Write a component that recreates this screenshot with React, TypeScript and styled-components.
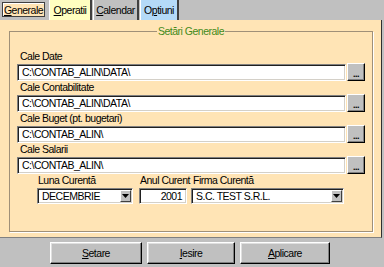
import React from 'react';
import styled, { createGlobalStyle } from 'styled-components';

const GlobalStyle = createGlobalStyle`
  html, body {
    margin: 0;
    padding: 0;
    background: #c0c0c0;
  }
  body {
    font-family: "Liberation Sans", Arial, sans-serif;
    font-size: 10.5px;
    letter-spacing: -0.5px;
    color: #000;
  }
`;

const Window = styled.div`
  width: 384px;
  height: 267px;
  background: #c0c0c0;
  display: flex;
  flex-direction: column;
  overflow: hidden;
`;

const TabBar = styled.div`
  height: 20px;
  display: flex;
  align-items: stretch;
  padding-left: 2px;
`;

const Tab = styled.div<{ $bg: string; $w: number; $gap?: number }>`
  width: ${(p) => p.$w}px;
  box-sizing: border-box;
  display: flex;
  align-items: center;
  justify-content: center;
  margin-right: ${(p) => p.$gap ?? 1}px;
  background: ${(p) => p.$bg};
  border-left: 1px solid #fff;
  border-right: 2px solid #404040;
  white-space: nowrap;
`;

const FocusTab = styled.div`
  width: 43px;
  box-sizing: border-box;
  margin: 2px 4px 3px 0;
  display: flex;
  align-items: center;
  justify-content: center;
  background: #ffe4b5;
  border: 1px solid #404040;
  box-shadow: inset 1px 1px 0 #fff;
  white-space: nowrap;
`;

const Panel = styled.div`
  width: 382px;
  height: 218px;
  box-sizing: border-box;
  background: #ffe4b5;
  border-right: 1px solid #303030;
  border-bottom: 1px solid #808080;
  padding: 5px 8px 5px 9px;
  display: flex;
`;

const Group = styled.fieldset`
  flex: 1;
  margin: 0;
  padding: 12px 7px 0 7px;
  border: 1px solid #a09078;
  box-shadow: 1px 1px 0 #fff;
  min-width: 0;
`;

const Legend = styled.legend`
  margin: 0 auto;
  padding: 0 1px;
  color: #3f8a1a;
  line-height: 13px;
`;

const Label = styled.div<{ $indent?: number }>`
  height: 13px;
  line-height: 13px;
  padding-left: ${(p) => p.$indent ?? 3}px;
  white-space: nowrap;
`;

const Row = styled.div`
  height: 18px;
  display: flex;
  align-items: center;
  gap: 1px;
`;

const sunken = `
  box-sizing: border-box;
  background: #fff;
  border-top: 1px solid #808080;
  border-left: 1px solid #808080;
  border-right: 1px solid #fff;
  border-bottom: 1px solid #fff;
  box-shadow: inset 1px 1px 0 #202020, inset -1px -1px 0 #d4d0c8;
`;

const TextBox = styled.div<{ $align?: string }>`
  ${sunken}
  flex: 1;
  height: 17px;
  padding: 0 4px;
  display: flex;
  align-items: center;
  justify-content: ${(p) => (p.$align === 'right' ? 'flex-end' : 'flex-start')};
  white-space: nowrap;
  overflow: hidden;
`;

const DotsButton = styled.div`
  width: 18px;
  height: 18px;
  box-sizing: border-box;
  background: #c0c0c0;
  border-top: 1px solid #fff;
  border-left: 1px solid #fff;
  border-right: 1px solid #000;
  border-bottom: 1px solid #000;
  box-shadow: inset -1px -1px 0 #808080;
  display: flex;
  align-items: flex-end;
  justify-content: center;
  font-size: 9px;
  font-weight: bold;
  line-height: 11px;
  letter-spacing: -0.5px;
`;

const BottomRow = styled.div`
  display: grid;
  grid-template-columns: 96px 48px 151px;
  column-gap: 6px;
  padding-left: 20px;
  & > :last-child {
    margin-left: -2px;
  }
`;

const Field = styled.div`
  display: flex;
  flex-direction: column;
`;

const Combo = styled.div`
  ${sunken}
  height: 16px;
  margin-top: 1px;
  display: flex;
  align-items: stretch;
  padding: 1px 1px 1px 4px;
`;

const ComboText = styled.div`
  flex: 1;
  display: flex;
  align-items: center;
  white-space: nowrap;
`;

const ComboArrow = styled.div`
  width: 11px;
  box-sizing: border-box;
  background: #c0c0c0;
  border-top: 1px solid #fff;
  border-left: 1px solid #fff;
  border-right: 1px solid #404040;
  border-bottom: 1px solid #404040;
  display: flex;
  align-items: center;
  justify-content: center;
`;

const SmallBox = styled(TextBox)`
  flex: none;
  height: 16px;
  margin-top: 1px;
`;

const ButtonBar = styled.div`
  display: flex;
  justify-content: center;
  gap: 5px;
  padding: 4px 0 0 0;
  margin-left: -4px;
`;

const Button = styled.div<{ $w: number }>`
  width: ${(p) => p.$w}px;
  height: 22px;
  box-sizing: border-box;
  background: #c0c0c0;
  border-top: 1px solid #fff;
  border-left: 1px solid #fff;
  border-right: 1px solid #000;
  border-bottom: 1px solid #000;
  box-shadow: inset -1px -1px 0 #808080, inset 1px 1px 0 #dfdfdf;
  display: flex;
  align-items: center;
  justify-content: center;
`;

const paths = [
  { label: 'Cale Date', value: 'C:\\CONTAB_ALIN\\DATA\\' },
  { label: 'Cale Contabilitate', value: 'C:\\CONTAB_ALIN\\DATA\\' },
  { label: 'Cale Buget (pt. bugetari)', value: 'C:\\CONTAB_ALIN\\' },
  { label: 'Cale Salarii', value: 'C:\\CONTAB_ALIN\\' },
];

const Arrow = () => (
  <svg width="7" height="4" viewBox="0 0 7 4">
    <path d="M0 0h7L3.5 4z" fill="#000" />
  </svg>
);

export default function App() {
  return (
    <Window>
      <GlobalStyle />
      <TabBar>
        <FocusTab>
          <u>G</u>enerale
        </FocusTab>
        <Tab $bg="#ffffc0" $w={43}>
          <u>O</u>peratii
        </Tab>
        <Tab $bg="#c0c0c0" $w={46}>
          <u>C</u>alendar
        </Tab>
        <Tab $bg="#b4daf8" $w={39}>
          O<u>p</u>tiuni
        </Tab>
      </TabBar>
      <Panel>
        <Group>
          <Legend>Setări Generale</Legend>
          {paths.map((p) => (
            <React.Fragment key={p.label}>
              <Label>{p.label}</Label>
              <Row>
                <TextBox>{p.value}</TextBox>
                <DotsButton>...</DotsButton>
              </Row>
            </React.Fragment>
          ))}
          <BottomRow>
            <Field>
              <Label $indent={1}>Luna Curentă</Label>
              <Combo>
                <ComboText>DECEMBRIE</ComboText>
                <ComboArrow>
                  <Arrow />
                </ComboArrow>
              </Combo>
            </Field>
            <Field>
              <Label $indent={1}>Anul Curent</Label>
              <SmallBox $align="right">2001</SmallBox>
            </Field>
            <Field>
              <Label $indent={2}>Firma Curentă</Label>
              <Combo>
                <ComboText>S.C. TEST S.R.L.</ComboText>
                <ComboArrow>
                  <Arrow />
                </ComboArrow>
              </Combo>
            </Field>
          </BottomRow>
        </Group>
      </Panel>
      <ButtonBar>
        <Button $w={92}>
          <u>S</u>etare
        </Button>
        <Button $w={88}>
          <u>I</u>esire
        </Button>
        <Button $w={90}>
          <u>A</u>plicare
        </Button>
      </ButtonBar>
    </Window>
  );
}
